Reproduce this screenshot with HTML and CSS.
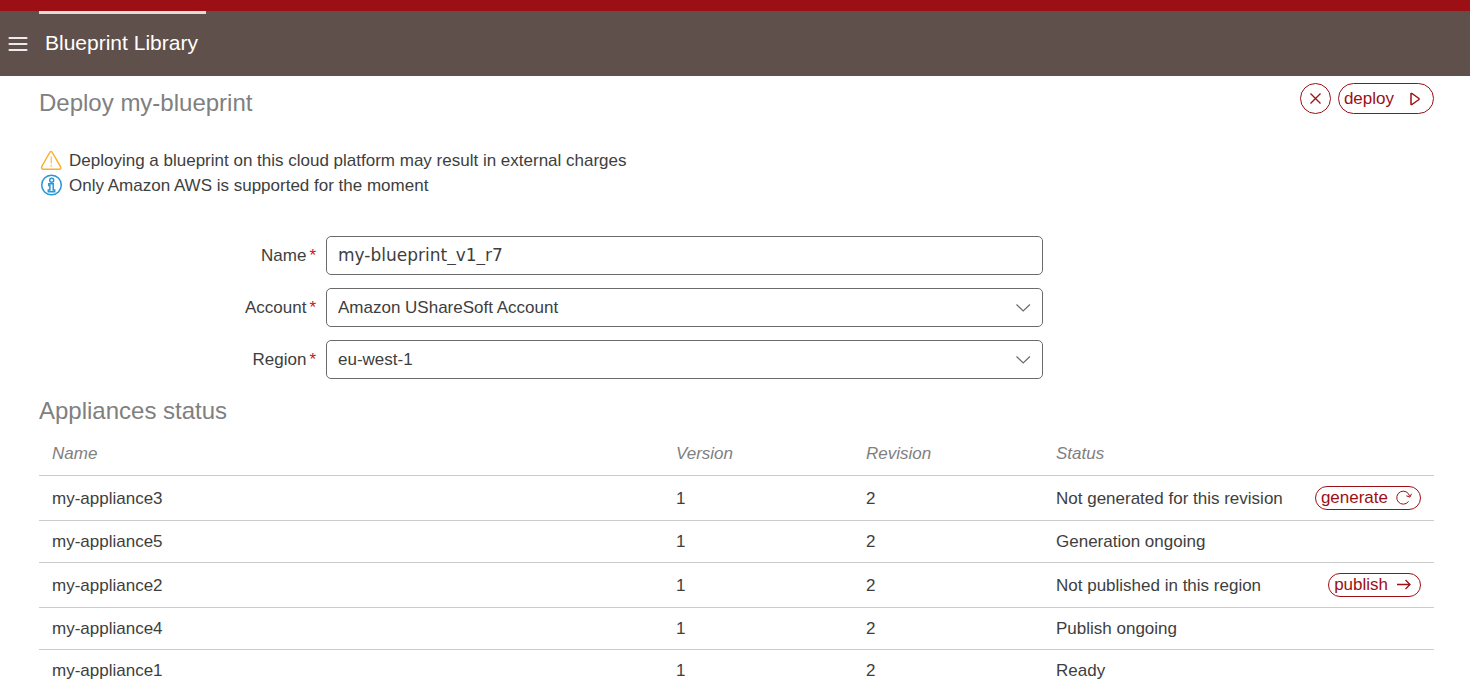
FILE: index.html
```html
<!DOCTYPE html>
<html lang="en">
<head>
<meta charset="utf-8">
<title>Blueprint Library</title>
<link rel="stylesheet" href="styles.css">
</head>
<body>
<header class="topbar">
  <button class="menu" type="button" aria-label="Menu">
    <svg width="20" height="16" viewBox="0 0 20 16"><path d="M1.500 2h17M1.500 8h17M1.500 14h17" stroke="#efebea" stroke-width="2.200" stroke-linecap="round"/></svg>
  </button>
  <a class="tab" href="#">Blueprint Library</a>
</header>
<main class="page">
  <div class="heading">
    <h1 class="title">Deploy my-blueprint</h1>
    <div class="actions">
      <button class="pill round" type="button" aria-label="Cancel">
        <svg width="13" height="13" viewBox="0 0 13 13"><path class="mid" d="M1.500 1.500l10 10M11.500 1.500l-10 10"/></svg>
      </button>
      <button class="pill big" type="button">deploy
        <svg width="14" height="14" viewBox="0 0 14 14"><path class="bold" d="M3 1.500v11h1l7-5v-1l-7-5z"/></svg>
      </button>
    </div>
  </div>
  <div class="notes">
    <p class="note">
      <svg class="note-icon warn" width="24" height="24" viewBox="0 0 24 24"><path d="M10.400 4Q12 1.200 13.600 4L21.500 17.500Q22.300 20.300 20 20.300H4.500Q2 20.300 2.800 17.500Z"/><path class="mark" d="M12.200 7.500v7M12.200 15.800v2"/></svg>
      Deploying a blueprint on this cloud platform may result in external charges
    </p>
    <p class="note">
      <svg class="note-icon info" width="24" height="24" viewBox="0 0 24 24"><circle cx="12.500" cy="11" r="9.800"/><circle cx="12.700" cy="6.200" r="2"/><path d="M9.800 9.700h4.400v6.300h1.500v1.800H9.300V16h1.600v-4.500H9.800z"/></svg>
      Only Amazon AWS is supported for the moment
    </p>
  </div>
  <form class="form">
    <label class="label" for="name">Name<span class="req">*</span></label>
    <input class="field typed" id="name" type="text" value="my-blueprint_v1_r7">
    <label class="label" for="account">Account<span class="req">*</span></label>
    <div class="select">
      <select class="field" id="account"><option>Amazon UShareSoft Account</option></select>
      <svg class="chevron" width="16" height="10" viewBox="0 0 16 10"><path d="M1.500 1.500L8.200 8l6.700-6.500"/></svg>
    </div>
    <label class="label" for="region">Region<span class="req">*</span></label>
    <div class="select">
      <select class="field" id="region"><option>eu-west-1</option></select>
      <svg class="chevron" width="16" height="10" viewBox="0 0 16 10"><path d="M1.500 1.500L8.200 8l6.700-6.500"/></svg>
    </div>
  </form>
  <h2 class="title">Appliances status</h2>
  <table class="table">
    <thead>
      <tr><th>Name</th><th class="num">Version</th><th class="num">Revision</th><th class="status">Status</th></tr>
    </thead>
    <tbody>
      <tr><td>my-appliance3</td><td>1</td><td>2</td><td><div class="state">Not generated for this revision
        <button class="pill" type="button">generate
          <svg width="18" height="16" viewBox="0 0 18 16"><path d="M13.500 11.500A6.500 6.500 0 1 1 14.600 6.200M11.300 5.800l3.600 1.300L16.500 3.800"/></svg>
        </button></div></td></tr>
      <tr><td>my-appliance5</td><td>1</td><td>2</td><td>Generation ongoing</td></tr>
      <tr><td>my-appliance2</td><td>1</td><td>2</td><td><div class="state">Not published in this region
        <button class="pill" type="button">publish
          <svg width="18" height="16" viewBox="0 0 18 16"><path class="mid" d="M2 7.500h13M10.500 3L15 7.500 10.500 12"/></svg>
        </button></div></td></tr>
      <tr><td>my-appliance4</td><td>1</td><td>2</td><td>Publish ongoing</td></tr>
      <tr><td>my-appliance1</td><td>1</td><td>2</td><td>Ready</td></tr>
    </tbody>
  </table>
</main>
</body>
</html>
```
FILE: styles.css
```css
* { box-sizing: border-box; }
body {
  margin: 0;
  background: #fff;
  color: #3e3e3e;
  font: 17px/20px "Liberation Sans", Arial, sans-serif;
}
button, select, input { font: inherit; color: inherit; margin: 0; }
svg { display: block; fill: none; flex: none; }

.topbar {
  display: flex;
  height: 76px;
  border-top: 11px solid #9c0f15;
  background: #5f504b;
}
.menu { width: 39px; padding: 0 0 0 8px; border: 0; background: none; }
.tab {
  align-self: flex-start;
  padding: 17px 8px 0 6px;
  border-top: 3px solid #e3dbd9;
  color: #fff;
  font-size: 21px;
  line-height: 24px;
  text-decoration: none;
}

.page { padding: 7px 36px 0 39px; }
.heading { display: flex; justify-content: space-between; align-items: flex-start; }
.title { margin: 0; color: #808080; font-size: 24px; font-weight: 400; line-height: 28px; }
.heading .title { padding-top: 6px; }
.actions { display: flex; gap: 7px; }
.pill {
  display: inline-flex;
  align-items: center;
  gap: 7px;
  height: 24px;
  padding: 1px 7px 0 5px;
  border: 1px solid #9c0f15;
  border-radius: 16px;
  background: #fff;
  color: #9c0f15;
}
.pill svg { stroke: currentColor; stroke-width: 1; }
.pill .mid { stroke-width: 1.3; }
.pill .bold { stroke-width: 1.5; stroke-linejoin: round; }
.big { height: 31px; gap: 14px; padding-right: 11px; }
.round { justify-content: center; width: 31px; height: 31px; padding: 0; }

.notes { padding-top: 31px; }
.note { display: flex; align-items: center; gap: 6px; height: 25px; margin: 0; }
.note-icon { stroke-width: 1.5; }
.mark { stroke-width: 1; }
.warn { stroke: #fbaf2d; }
.info { stroke: #2a96d4; }

.form {
  display: grid;
  grid-template-columns: 277px minmax(0, 717px);
  gap: 13px 10px;
  align-items: center;
  padding: 38px 0 18px;
}
.label { text-align: right; }
.req { padding-left: 3px; color: #c4161c; }
.field {
  display: block;
  width: 100%;
  height: 39px;
  padding: 0 11px;
  border: 1px solid #6b6b6b;
  border-radius: 5px;
  background: #fff;
  appearance: none;
}
.typed { padding-bottom: 2px; font-family: "DejaVu Sans", sans-serif; }
.select { position: relative; }
.chevron { position: absolute; top: 15px; right: 12px; stroke: #6b6b6b; stroke-width: 1.2; pointer-events: none; }

.table { width: 100%; table-layout: fixed; border-collapse: collapse; }
.table th, .table td { padding: 2px 13px 0; text-align: left; }
.table th { height: 50px; padding-top: 9px; color: #808080; font-style: italic; font-weight: 400; }
.table td { height: 42px; border-top: 1px solid #ccc; }
.num { width: 190px; }
.status { width: 391px; }
.state { display: flex; align-items: center; justify-content: space-between; height: 42px; }
.state .pill { margin-bottom: 2px; }
```
